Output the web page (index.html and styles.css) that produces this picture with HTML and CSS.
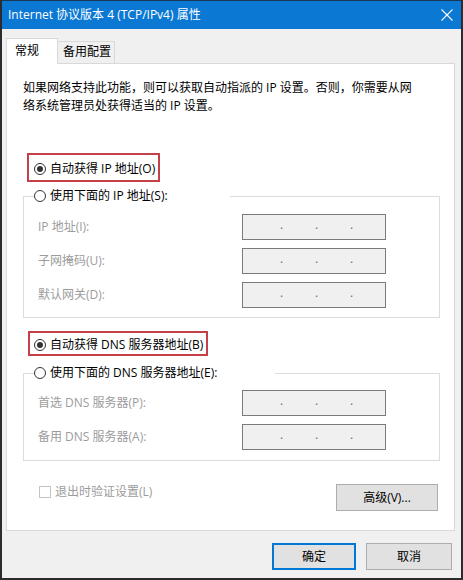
FILE: index.html
```html
<!DOCTYPE html>
<html lang="zh-CN">
<head>
<meta charset="utf-8">
<title>Internet 协议版本 4 (TCP/IPv4) 属性</title>
<link rel="stylesheet" href="styles.css">
</head>
<body>
<div class="window">
  <header class="titlebar">
    <span class="title">Internet 协议版本 4 (TCP/IPv4) 属性</span>
    <svg class="close" width="12" height="12" viewBox="0 0 12 12"><path d="M0.5 0.5L11.5 11.5M11.5 0.5L0.5 11.5" stroke="#fff" stroke-width="1.1" fill="none"/></svg>
  </header>
  <div class="content">
    <div class="tabs">
      <div class="tab active">常规</div>
      <div class="tab">备用配置</div>
    </div>
    <div class="panel">
      <p class="desc">如果网络支持此功能，则可以获取自动指派的 IP 设置。否则，你需要从网<br>络系统管理员处获得适当的 IP 设置。</p>

      <div class="mark mark-ip">
        <div class="opt"><span class="radio checked"></span>自动获得 IP 地址(O)</div>
      </div>
      <fieldset class="group group-ip">
        <legend class="opt legend legend-ip"><span class="radio"></span>使用下面的 IP 地址(S):</legend>
        <div class="rows">
          <span class="lbl">IP 地址(I):</span>
          <span class="ip"><i>.</i><i>.</i><i>.</i></span>
          <span class="lbl">子网掩码(U):</span>
          <span class="ip"><i>.</i><i>.</i><i>.</i></span>
          <span class="lbl">默认网关(D):</span>
          <span class="ip"><i>.</i><i>.</i><i>.</i></span>
        </div>
      </fieldset>

      <div class="mark mark-dns">
        <div class="opt"><span class="radio checked"></span>自动获得 DNS 服务器地址(B)</div>
      </div>
      <fieldset class="group group-dns">
        <legend class="opt legend legend-dns"><span class="radio"></span>使用下面的 DNS 服务器地址(E):</legend>
        <div class="rows">
          <span class="lbl">首选 DNS 服务器(P):</span>
          <span class="ip"><i>.</i><i>.</i><i>.</i></span>
          <span class="lbl">备用 DNS 服务器(A):</span>
          <span class="ip"><i>.</i><i>.</i><i>.</i></span>
        </div>
      </fieldset>

      <div class="bottom-row">
        <div class="check"><span class="box"></span>退出时验证设置(L)</div>
        <button class="btn adv">高级(V)...</button>
      </div>
    </div>
    <div class="footer">
      <button class="btn ok">确定</button>
      <button class="btn cancel">取消</button>
    </div>
  </div>
</div>
</body>
</html>
```
FILE: styles.css
```css
html, body {
  margin: 0;
  padding: 0;
}
body {
  width: 463px;
  height: 580px;
  font-family: "Open Sans", "Noto Sans CJK SC", sans-serif;
  font-size: 12px;
  color: #000;
  background: #f0f0f0;
}
.window {
  box-sizing: border-box;
  width: 463px;
  height: 580px;
  border: 2px solid #2c2c2c;
  border-top: 1px solid #1d3550;
  background: #f0f0f0;
  display: flex;
  flex-direction: column;
}
.titlebar {
  height: 28px;
  flex: none;
  background: #0b78d4;
  color: #fff;
  display: flex;
  align-items: center;
  justify-content: space-between;
  padding: 0 8px 0 6px;
}
.title {
  line-height: 18px;
  white-space: nowrap;
}
.close {
  display: block;
}
.content {
  flex: 1;
  display: flex;
  flex-direction: column;
  padding: 9px 6px 0 4px;
}
.tabs {
  display: flex;
  align-items: flex-end;
  height: 26px;
  margin-bottom: -1px;
  position: relative;
  z-index: 1;
}
.tab {
  box-sizing: border-box;
  height: 22px;
  line-height: 20px;
  padding: 0 0 0 5px;
  width: 57px;
  border: 1px solid #d9d9d9;
  border-left: none;
  border-bottom: none;
  background: #f0f0f0;
  margin-bottom: 1px;
  white-space: nowrap;
}
.tab.active {
  height: 26px;
  line-height: 24px;
  width: 52px;
  padding-left: 8px;
  border-left: 1px solid #d9d9d9;
  background: #fff;
  margin-bottom: 0;
}
.panel {
  box-sizing: border-box;
  height: 468px;
  background: #fff;
  border: 1px solid #d9d9d9;
  padding: 15px 14px 0 16px;
  flex: none;
}
.desc {
  margin: 0;
  line-height: 18px;
  white-space: nowrap;
}
.opt {
  display: flex;
  align-items: center;
  height: 18px;
  line-height: 18px;
  white-space: nowrap;
}
.radio {
  box-sizing: border-box;
  width: 12px;
  height: 12px;
  border: 1px solid #333;
  border-radius: 50%;
  margin-right: 4px;
  display: flex;
  align-items: center;
  justify-content: center;
  background: #fff;
  flex: none;
}
.radio.checked::after {
  content: "";
  width: 6px;
  height: 6px;
  border-radius: 50%;
  background: #333;
}
.mark {
  width: fit-content;
  border: 2px solid #c6404a;
}
.mark-ip {
  margin: 38px 0 0 4px;
  padding: 5px 3px 2px 5px;
}
.mark-dns {
  margin: 13px 0 0 5px;
  padding: 3px 3px 0 4px;
}
.group {
  margin: 0;
  padding: 9px 0 9px 0;
  border: 1px solid #dcdcdc;
  min-width: 0;
}
.group-ip {
  margin-top: 5px;
}
.group-dns {
  margin-top: 8px;
  padding-top: 8px;
  padding-bottom: 10px;
}
.legend {
  margin-left: 10px;
  padding: 0;
}
.legend-ip {
  padding-right: 62px;
}
.legend-dns {
  padding-right: 58px;
}
.rows {
  display: grid;
  grid-template-columns: 204px 144px;
  row-gap: 8px;
  padding-left: 14px;
  align-items: center;
}
.lbl {
  color: #9c9c9c;
  line-height: 18px;
  white-space: nowrap;
}
.ip {
  box-sizing: border-box;
  height: 26px;
  border: 1px solid #7a7a7a;
  background: #f0f0f0;
  display: flex;
  align-items: center;
  padding: 0 0 4px 37px;
}
.ip i {
  font-style: normal;
  width: 35px;
  line-height: 12px;
  color: #6d6d6d;
}
.bottom-row {
  margin-top: 23px;
  display: flex;
  justify-content: space-between;
  align-items: flex-start;
}
.check {
  display: flex;
  align-items: center;
  height: 18px;
  line-height: 18px;
  margin: -1px 0 0 16px;
  color: #9c9c9c;
  white-space: nowrap;
}
.box {
  box-sizing: border-box;
  width: 12px;
  height: 12px;
  border: 1px solid #c4c4c4;
  background: #fff;
  margin-right: 4px;
}
.btn {
  box-sizing: border-box;
  height: 27px;
  padding: 0;
  font: inherit;
  color: #000;
  background: #e1e1e1;
  border: 1px solid #adadad;
  border-radius: 0;
  line-height: 18px;
}
.adv {
  width: 102px;
  margin-right: 2px;
}
.footer {
  display: flex;
  justify-content: flex-end;
  gap: 10px;
  padding: 12px 3px 0 0;
}
.ok {
  width: 84px;
  border: 2px solid #0078d7;
}
.cancel {
  width: 86px;
}
```
